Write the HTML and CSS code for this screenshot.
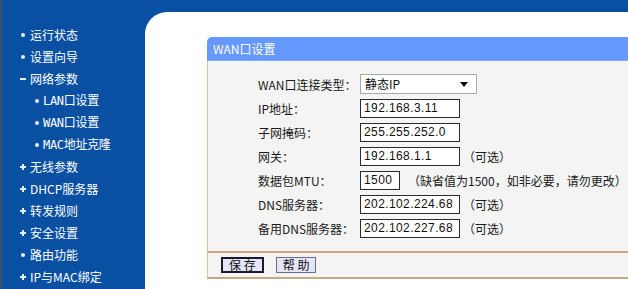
FILE: index.html
```html
<!DOCTYPE html>
<html lang="zh-CN">
<head>
<meta charset="utf-8">
<title>WAN口设置</title>
<link rel="stylesheet" href="styles.css">
</head>
<body>
<div class="page">
  <nav class="side">
    <ul class="menu">
      <li class="item dot">运行状态</li>
      <li class="item dot">设置向导</li>
      <li class="item minus">网络参数</li>
      <li class="item sub">LAN口设置</li>
      <li class="item sub">WAN口设置</li>
      <li class="item sub">MAC地址克隆</li>
      <li class="item plus">无线参数</li>
      <li class="item plus">DHCP服务器</li>
      <li class="item plus">转发规则</li>
      <li class="item plus">安全设置</li>
      <li class="item dot">路由功能</li>
      <li class="item plus">IP与MAC绑定</li>
    </ul>
  </nav>
  <main class="main">
    <section class="panel">
      <div class="panel-title">WAN口设置</div>
      <div class="panel-body">
        <div class="row">
          <span class="label">WAN口连接类型：</span>
          <span class="select">静态IP<span class="arrow"></span></span>
        </div>
        <div class="row">
          <span class="label">IP地址：</span>
          <span class="input">192.168.3.11</span>
        </div>
        <div class="row">
          <span class="label">子网掩码：</span>
          <span class="input">255.255.252.0</span>
        </div>
        <div class="row">
          <span class="label">网关：</span>
          <span class="input">192.168.1.1</span>
          <span class="note">（可选）</span>
        </div>
        <div class="row">
          <span class="label">数据包MTU：</span>
          <span class="input short">1500</span>
          <span class="note mtu">（缺省值为1500，如非必要，请勿更改）</span>
        </div>
        <div class="row">
          <span class="label">DNS服务器：</span>
          <span class="input">202.102.224.68</span>
          <span class="note">（可选）</span>
        </div>
        <div class="row">
          <span class="label">备用DNS服务器：</span>
          <span class="input">202.102.227.68</span>
          <span class="note">（可选）</span>
        </div>
      </div>
      <div class="panel-actions">
        <button class="btn active">保 存</button>
        <button class="btn">帮 助</button>
      </div>
    </section>
  </main>
</div>
</body>
</html>
```
FILE: styles.css
```css
* { box-sizing: border-box; }
html, body {
  margin: 0;
  padding: 0;
  width: 628px;
  height: 289px;
  overflow: hidden;
  background: #0a50a2;
  font-family: "Noto Sans CJK SC", "Noto Sans", sans-serif;
  font-size: 12px;
}
.page {
  display: flex;
  height: 289px;
  border-left: 2px solid #3a4f6e;
}
.side {
  width: 143px;
  flex: none;
  padding-top: 24px;
}
.menu {
  list-style: none;
  margin: 0;
  padding: 0;
}
.item {
  position: relative;
  height: 22px;
  line-height: 22px;
  color: #ffffff;
  padding-left: 28px;
  white-space: nowrap;
}
.item::before {
  content: "";
  position: absolute;
}
.dot::before {
  left: 19px;
  top: 9px;
  width: 4px;
  height: 4px;
  border-radius: 50%;
  background: #e8f0ff;
}
.minus::before {
  left: 18px;
  top: 10px;
  width: 6px;
  height: 2px;
  background: #e8f0ff;
}
.plus::before {
  left: 18px;
  top: 8px;
  width: 6px;
  height: 6px;
  background:
    linear-gradient(#e8f0ff, #e8f0ff) center / 6px 2px no-repeat,
    linear-gradient(#e8f0ff, #e8f0ff) center / 2px 6px no-repeat;
}
.sub {
  padding-left: 41px;
  font-family: "DejaVu Sans Mono", "Noto Sans CJK SC", monospace;
  letter-spacing: -0.3px;
}
.sub::before {
  left: 33px;
  top: 9px;
  width: 4px;
  height: 4px;
  border-radius: 50%;
  background: #e8f0ff;
}
.main {
  flex: 1;
  margin-top: 12px;
  background: #ffffff;
  border-top-left-radius: 22px;
  padding: 25px 0 0 62px;
  overflow: hidden;
}
.panel {
  width: 460px;
}
.panel-title {
  height: 24px;
  line-height: 24px;
  background: #6699ff;
  color: #ffffff;
  padding-left: 6px;
  border-top-left-radius: 5px;
  border-bottom: 1px solid #7faafa;
}
.panel-body {
  background: #f4f4f4;
  border-left: 1px solid #e6c494;
  padding: 11px 0 11px 50px;
}
.row {
  display: flex;
  align-items: center;
  height: 24px;
}
.label {
  width: 102px;
  flex: none;
  color: #1a1a1a;
  white-space: nowrap;
}
.input {
  width: 100px;
  height: 19px;
  line-height: 17px;
  border: 1px solid #2b2b2b;
  background: #ffffff;
  padding-left: 3px;
  font-family: "Liberation Sans", Arial, sans-serif;
  font-size: 12px;
  letter-spacing: 0.4px;
  color: #111;
}
.input.short { width: 40px; }
.select {
  position: relative;
  width: 117px;
  height: 20px;
  line-height: 18px;
  border: 1px solid #a8a8a8;
  background: #ffffff;
  padding-left: 4px;
  color: #111;
}
.arrow {
  position: absolute;
  right: 8px;
  top: 7px;
  width: 0;
  height: 0;
  border-left: 4px solid transparent;
  border-right: 4px solid transparent;
  border-top: 5px solid #111;
}
.note {
  margin-left: 3px;
  color: #1a1a1a;
  white-space: nowrap;
}
.note.mtu { margin-left: 8px; }
.panel-actions {
  background: #f4f4f4;
  border-left: 1px solid #e6c494;
  border-top: 2px solid #c8a880;
  border-bottom: 2px solid #c8a880;
  height: 28px;
  display: flex;
  align-items: center;
  gap: 12px;
  padding-left: 13px;
}
.btn {
  margin: 0;
  height: 16px;
  padding: 0 6px;
  line-height: 12px;
  font-family: "Noto Sans CJK SC", sans-serif;
  font-size: 12px;
  color: #111;
  background: #e4e4fb;
  border: 1px solid #6b6b8a;
}
.btn.active {
  border: 2px solid #1a1a2a;
}
```
